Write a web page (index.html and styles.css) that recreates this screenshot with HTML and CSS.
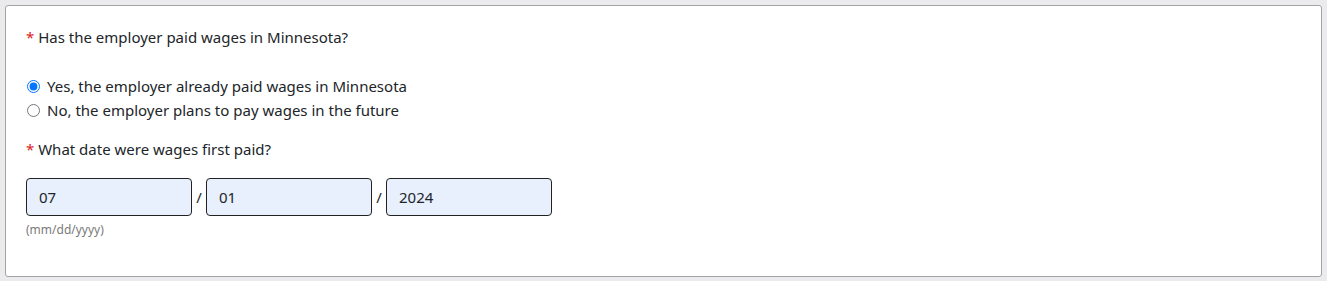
FILE: index.html
```html
<!DOCTYPE html>
<html lang="en">
<head>
<meta charset="utf-8">
<link rel="stylesheet" href="styles.css">
</head>
<body>
<div class="card">
  <fieldset class="group">
    <legend class="question"><span class="req">*</span> Has the employer paid wages in Minnesota?</legend>
    <div class="options">
      <label class="opt"><input type="radio" name="paid" checked> Yes, the employer already paid wages in Minnesota</label>
      <label class="opt"><input type="radio" name="paid"> No, the employer plans to pay wages in the future</label>
    </div>
  </fieldset>
  <div class="question q2"><span class="req">*</span> What date were wages first paid?</div>
  <div class="date">
    <input class="field" type="text" value="07">
    <span class="sep">/</span>
    <input class="field" type="text" value="01">
    <span class="sep">/</span>
    <input class="field" type="text" value="2024">
  </div>
  <div class="hint">(mm/dd/yyyy)</div>
</div>
</body>
</html>
```
FILE: styles.css
```css
html, body {
  margin: 0;
  padding: 0;
}
body {
  background: #ebebee;
  padding: 5px;
  font-family: "Noto Sans", "Open Sans", sans-serif;
  font-size: 15px;
  color: #212529;
}
.card {
  background: #fff;
  border: 1px solid #a3a3a3;
  border-radius: 3px;
  height: 272px;
  box-sizing: border-box;
  width: 1317px;
  padding: 21px 20px 0 20px;
}
.group {
  border: 0;
  margin: 0;
  padding: 0;
}
.question {
  padding: 0;
  line-height: 20px;
}
.req {
  color: #e02020;
}
.options {
  margin-top: 27px;
  display: flex;
  flex-direction: column;
}
.opt {
  display: flex;
  align-items: center;
  line-height: 24px;
  height: 24px;
}
.opt input {
  margin: 0 7px 0 1px;
  width: 13px;
  height: 13px;
}
.q2 {
  margin-top: 17px;
}
.date {
  margin-top: 19px;
  display: flex;
  align-items: center;
}
.field {
  width: 166px;
  height: 38px;
  box-sizing: border-box;
  border: 1px solid #222;
  border-radius: 4px;
  background: #e8f0fe;
  padding: 0 12px;
  font-family: inherit;
  font-size: 15px;
  color: #212529;
  margin: 0;
}
.sep {
  width: 14px;
  text-align: center;
  font-size: 15px;
}
.hint {
  margin-top: 5px;
  font-size: 12px;
  color: #7a7a7a;
}
```
